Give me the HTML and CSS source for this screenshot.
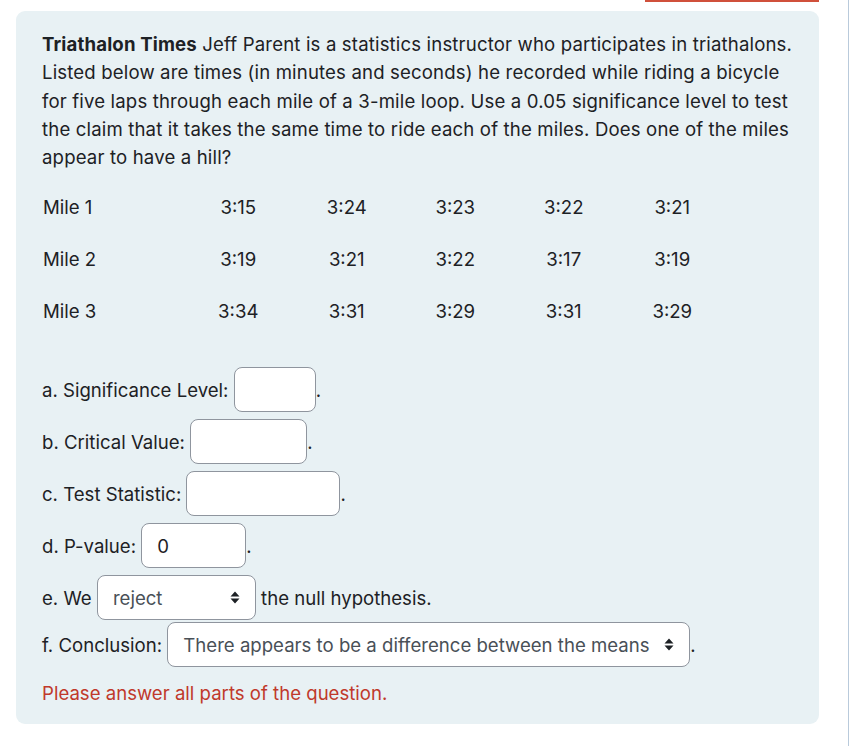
FILE: index.html
```html
<!DOCTYPE html>
<html>
<head>
<meta charset="utf-8">
<link rel="stylesheet" href="styles.css">
</head>
<body>
<div class="page">
  <div class="topline"></div>
  <div class="card">
    <p class="intro"><b>Triathalon Times</b> Jeff Parent is a statistics instructor who participates in triathalons. Listed below are times (in minutes and seconds) he recorded while riding a bicycle for five laps through each mile of a 3-mile loop. Use a 0.05 significance level to test the claim that it takes the same time to ride each of the miles. Does one of the miles appear to have a hill?</p>
    <table class="times">
      <tr><td class="lab">Mile 1</td><td>3:15</td><td>3:24</td><td>3:23</td><td>3:22</td><td>3:21</td></tr>
      <tr><td class="lab">Mile 2</td><td>3:19</td><td>3:21</td><td>3:22</td><td>3:17</td><td>3:19</td></tr>
      <tr><td class="lab">Mile 3</td><td>3:34</td><td>3:31</td><td>3:29</td><td>3:31</td><td>3:29</td></tr>
    </table>
    <div class="qrow">a. Significance Level: <span class="field w-a"></span>.</div>
    <div class="qrow">b. Critical Value: <span class="field w-b"></span>.</div>
    <div class="qrow">c. Test Statistic: <span class="field w-c"></span>.</div>
    <div class="qrow">d. P-value: <span class="field w-d">0</span>.</div>
    <div class="qrow tight">e. We <span class="select w-e"><span class="sel-text">reject</span><svg class="arrows" width="10" height="13" viewBox="0 0 10 13"><path d="M5 0.5 L9.5 5.5 L0.5 5.5 Z M5 12.5 L9.5 7.5 L0.5 7.5 Z" fill="#1d2125"/></svg></span> the null hypothesis.</div>
    <div class="qrow last">f. Conclusion: <span class="select w-f"><span class="sel-text">There appears to be a difference between the means</span><svg class="arrows" width="10" height="13" viewBox="0 0 10 13"><path d="M5 0.5 L9.5 5.5 L0.5 5.5 Z M5 12.5 L9.5 7.5 L0.5 7.5 Z" fill="#1d2125"/></svg></span>.</div>
    <p class="error">Please answer all parts of the question.</p>
  </div>
</div>
</body>
</html>
```

FILE: styles.css
```css
html, body {
  margin: 0;
  padding: 0;
  background: #ffffff;
}
body {
  font-family: Inter, "Noto Sans", sans-serif;
  font-size: 18.6px;
  color: #1d2125;
}
.page {
  width: 848px;
  height: 746px;
  border-right: 1px solid #b9cadb;
  box-sizing: content-box;
}
.topline {
  margin-left: 645px;
  width: 174px;
  height: 2px;
  background: #d0503b;
}
.card {
  margin: 9px 0 0 16px;
  width: 803px;
  box-sizing: border-box;
  background: #e8f1f4;
  border-radius: 9px;
  padding: 19px 26px 17px 26px;
}
.intro {
  margin: 0;
  line-height: 28.3px;
  letter-spacing: 0.15px;
}
.intro b {
  font-weight: 700;
}
.times {
  border-collapse: collapse;
  margin-top: 10px;
  margin-bottom: 30px;
}
.times td {
  height: 52px;
  padding: 0;
  width: 108.5px;
  text-align: center;
  vertical-align: middle;
}
.times td.lab {
  width: 141px;
  text-align: left;
  padding-left: 1px;
}
.qrow {
  display: flex;
  align-items: center;
  height: 45px;
  margin-bottom: 7px;
  white-space: pre;
}
.qrow.tight {
  margin-bottom: 2px;
}
.qrow.last {
  margin-bottom: 0;
}
.field, .select {
  display: inline-flex;
  align-items: center;
  box-sizing: border-box;
  height: 45px;
  background: #ffffff;
  border: 1px solid #8f959e;
  border-radius: 8px;
  padding: 0 15px;
  color: #1d2125;
}
.w-a { width: 82px; }
.w-b { width: 117px; }
.w-c { width: 154px; }
.w-d { width: 105px; }
.w-e { width: 159px; }
.w-f { width: 523px; }
.select {
  justify-content: space-between;
  padding-right: 15px;
}
.sel-text {
  color: #495057;
}
.arrows {
  display: block;
  flex: none;
}
.error {
  margin: 12px 0 0 0;
  line-height: 28px;
  color: #c0392b;
}
```
